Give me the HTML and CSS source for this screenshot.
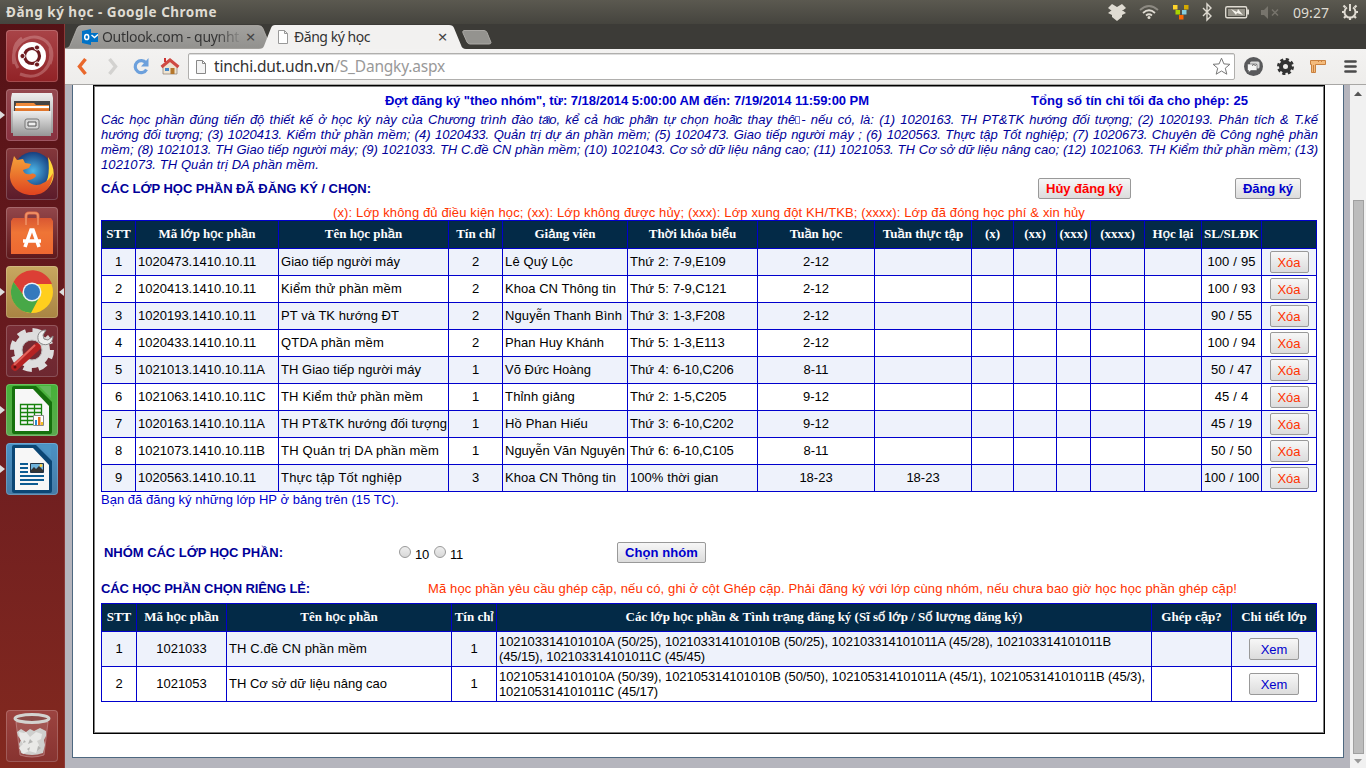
FILE: index.html
```html
<!DOCTYPE html>
<html lang="vi">
<head>
<meta charset="utf-8">
<title>Đăng ký học</title>
<link rel="stylesheet" href="styles.css">
</head>
<body>
<header class="panel">
  <span class="panel-title" data-w="211">Đăng ký học - Google Chrome</span>
  <svg class="panel-icons" width="180" height="24" viewBox="1105 0 180 24">
    <g fill="#dfdbd2">
      <path d="M1112 4l5 3-5 4-4-3zM1122 4l-5 3 5 4 4-3zM1108 13l4-3 5 4 5-4 4 3-4 2v2l-5 4-5-4v-2z"/><path d="M1112 7h10v9h-10z"/>
    </g>
    <g fill="none" stroke="#dfdbd2" stroke-width="1.8">
      <path d="M1140 10q9-8 18 0" stroke="#8d8a82"/><path d="M1143 13q6-5.500 12 0M1146 15.500q3-2.500 6 0"/>
    </g>
    <circle cx="1149" cy="17.500" r="1.500" fill="#dfdbd2"/>
    <path fill="#ffd42a" d="M1173 5h4.500v4.500h-4.500z"/><path fill="#d4aa00" d="M1184 5h4.500v4.500h-4.500z"/><path fill="#aad400" d="M1175.500 10h4.500v4.500h-4.500z"/><path fill="#87cdde" d="M1182 10h4.500v4.500h-4.500z"/><path fill="#ff6600" d="M1179 15h4.500v4.500h-4.500z"/>
    <path d="M1203 8l8 8-4 4V4l4 4-8 8" fill="none" stroke="#dfdbd2" stroke-width="1.400"/>
    <rect x="1225.700" y="6.700" width="21" height="11" rx="1.500" fill="none" stroke="#dfdbd2" stroke-width="1.400"/><path fill="#dfdbd2" d="M1247 9.500h2v5h-2z"/><path fill="#969389" d="M1228 9h17v7h-17z"/><path fill="#f5f2ea" d="M1231 9l6 3 1-3 5 6-6-2-1 2z"/>
    <g fill="#77746c"><path d="M1261 10h3l4-4v13l-4-4h-3z"/><path d="M1272 9.500l6 6m0-6l-6 6" stroke="#77746c" stroke-width="1.500"/></g>
  </svg>
  <span class="clock" data-w="36">09:27</span>
  <svg class="power" width="18" height="18" viewBox="-9 -9 18 18"><g fill="none" stroke="#dfdbd2"><path stroke-width="2" d="M-3-4.500a5.500 5.500 0 1 0 6 0M0-8v7"/><path stroke-width="2.200" d="M-4.500-4.500l-2-2M4.500-4.500l2-2M-6 0h-2M6 0h2M-4 4l-2 2M4 4l2 2M0 6v2"/></g></svg>
</header>
<div class="desktop">
<nav class="launcher">
  <div class="tile t-dash"><svg viewBox="0 0 52 52"><g fill="none" stroke="#f0c7c7" stroke-opacity=".3" stroke-width="3"><path d="M8 34C4 14 22 4 34 8s14 16 10 26M14 44C34 52 48 36 44 18M16 8C6 14 6 28 12 38"/></g><circle cx="26" cy="26" r="14" fill="#fff"/><circle cx="26" cy="26" r="7.500" fill="none" stroke="#6d1a1f" stroke-width="3.200"/><g fill="#6d1a1f" stroke="#fff" stroke-width="1"><circle cx="16.500" cy="26" r="2.600"/><circle cx="31" cy="17.500" r="2.600"/><circle cx="31" cy="34.500" r="2.600"/></g></svg></div>
  <div class="tile t-files run"><svg viewBox="0 0 52 52"><defs><linearGradient id="met" x2="0" y2="1"><stop stop-color="#eee"/><stop offset="1" stop-color="#969696"/></linearGradient></defs><path d="M6 4h40l1 5v35H5V9z" fill="url(#met)"/><path fill="#444" d="M8 12h36v11H8z"/><path fill="#f08a3a" d="M10 14h18l2 2h13v8H9z"/><path fill="#fff" d="M9 17h34v2H9z"/><path fill="#e0762d" d="M9 20h34v3H9z"/><path d="M7 22h38v25H7z" fill="url(#met)"/><rect x="19" y="30" width="14" height="10" rx="2" fill="#d5d5d5" stroke="#777"/><path fill="#eee" stroke="#555" d="M22 33h8v4h-8z"/></svg></div>
  <div class="tile t-fox"><svg viewBox="0 0 52 52"><defs><radialGradient id="ff"><stop stop-color="#4cb7e8"/><stop offset="1" stop-color="#173f7f"/></radialGradient><linearGradient id="fo" x2="0" y2="1"><stop stop-color="#f5a33a"/><stop offset="1" stop-color="#df431f"/></linearGradient></defs><circle cx="27" cy="23" r="19" fill="url(#ff)"/><path fill="#ffd83a" d="M42 9c11 16 6 34-14 37l-4-3c16 0 21-12 18-34z"/><path fill="url(#fo)" d="M5 20l3-12 3 4 6-1 2 4 6 1-2 4-6 2c1 4 4 5 8 4 2-1 5 0 5 2-3 4-7 4-9 4 4 6 12 6 16 3 5-2 7-5 10-10-1 13-7 22-21 22C12 47 3 37 4 26z"/></svg></div>
  <div class="tile t-soft"><svg viewBox="0 0 52 52"><path fill="none" stroke="#e06c48" stroke-width="3" d="M20 17V9q0-3 3-3h6q3 0 3 3v8"/><defs><linearGradient id="bag" x2="0" y2="1"><stop stop-color="#d95732"/><stop offset=".4" stop-color="#ef7536"/><stop offset="1" stop-color="#ee6831"/></linearGradient></defs><path fill="url(#bag)" d="M5 14l2-3h38l2 3v33H5z"/><path fill="none" stroke="#f09468" stroke-width="1.500" d="M20 18V9q0-3 3-3h6q3 0 3 3v9"/><path fill="none" stroke="#fff" stroke-width="3.600" d="M19 40l6-17h2l6 17M17 34h18"/></svg></div>
  <div class="tile t-chrome run foc"><svg viewBox="0 0 52 52"><circle cx="26" cy="26" r="21" fill="#ffcf1e"/><path fill="#dc3f35" d="M7.500 16A21 21 0 0 1 46 18H26a8 8 0 0 0-7 4l-3 6z"/><path fill="#47a847" d="M7.500 16A21 21 0 0 0 25 47l9-17-8 4-8-4z"/><circle cx="26" cy="26" r="9.500" fill="#eef3f7"/><circle cx="26" cy="26" r="8" fill="#3479bd"/></svg></div>
  <div class="tile t-set"><svg viewBox="0 0 52 52"><circle cx="26" cy="25" r="19.500" fill="none" stroke="#ddd" stroke-width="5" stroke-dasharray="8.500 6.800"/><circle cx="26" cy="25" r="14" fill="none" stroke="#dedede" stroke-width="8"/><circle cx="26" cy="25" r="10" fill="none" stroke="#bbb"/><path d="M32 22l8-8" stroke="#ccc" stroke-width="5"/><path d="M9 42L31 22" stroke="#b52222" stroke-width="7.500" stroke-linecap="round"/><path d="M8 40L29 20" stroke="#e2625b" stroke-width="2"/><path d="M40 5c-7 0-10 6-7 12 5 5 14 3 14-6l-5 4-4-1-1-4z" fill="#eee" stroke="#888"/><circle cx="9" cy="42" r="1.500" fill="#5b1010"/></svg></div>
  <div class="tile t-calc run"><svg viewBox="0 0 52 52"><path fill="#16700d" d="M6 4q0-2 2-2h22l16 16v30q0 2-2 2H8q-2 0-2-2z"/><path fill="#63b95a" d="M33 2h12v12z"/><path fill="#f7f7f7" d="M9 5h18l16 17v25H9z"/><g fill="none" stroke="#16820d" stroke-width="1.300"><path d="M14.500 20.500h21v20h-21zM14.500 24.500h21M14.500 28.500h21M14.500 32.500h21M14.500 36.500h21M21.500 20.500v20M28.500 20.500v20"/></g><path fill="#fff" stroke="#888" d="M27.500 31.500h10v10h-10z"/><path fill="#2a8ad0" d="M29 36h2v5h-2z"/><path fill="#e86f1c" d="M32 33h2.500v8H32z"/><path fill="#f2c020" d="M35 38h2v3h-2z"/></svg></div>
  <div class="tile t-writer run"><svg viewBox="0 0 52 52"><path fill="#0b4674" d="M6 4q0-2 2-2h22l16 16v30q0 2-2 2H8q-2 0-2-2z"/><path fill="#4c94c4" d="M33 2h12v12z"/><path fill="#f7f7f7" d="M9 5h18l16 17v25H9z"/><path stroke="#0c5b92" stroke-width="2" d="M14 21h8M14 25h8M14 29h8M14 33h24M14 37h24M14 41h18"/><path fill="#6fb3dc" stroke="#234" d="M24.500 20.500h13v9h-13z"/><path fill="#333" d="M25 29v-2l3-3 2 2 3-3 4 4v2z"/><circle cx="35" cy="22.500" r="1.500" fill="#ffcf3f"/></svg></div>
  <div class="tile t-trash"><svg viewBox="0 0 52 52"><path fill="#fff" fill-opacity=".12" stroke="#c99" stroke-opacity=".6" d="M10 12l4 33q12 4 24 0l4-33z"/><path fill="#cfcfcd" d="M11 22l4-3 5 3 4-3 4 2 6-3 6 3v5l-2 4 1 5-2 8q-11 4-22 0l-2-9 2-4-3-4z"/><path fill="#e9e9e7" d="M13 22l5 1 2-1 4 5 6-5 6 2-1 5-4 2 2 4-3 8-7-2-6 3-4-6 4-4-3-5z"/><path fill="#b4b4b2" d="M24 29l3 3-5 2zM32 36l3 2-4 3zM18 30l2 2-3 1zM21 39l3-2-1 4z"/><ellipse cx="26" cy="8.500" rx="17" ry="4" fill="#8a4a47" stroke="#d3d3d0" stroke-width="3"/></svg></div>
</nav>
<main class="browser">
  <div class="tabstrip">
    <svg class="tabshape" width="440" height="25" viewBox="65 24 440 25"><defs><linearGradient id="tg" x2="0" y2="1"><stop stop-color="#a3a29f"/><stop offset="1" stop-color="#92918e"/></linearGradient></defs><path fill="url(#tg)" stroke="#bbb9b4" stroke-width=".7" d="M65 48.500q4 0 5-3l7-17q1-3 5-3h176q4 0 5 3l7 17q1 3 4 3z"/><path fill="#f2f1f0" d="M259 49q4 0 5-3l7-18q1-3 4-3h174q4 0 5 3l7 17q1 4 5 4z"/><path fill="#94938f" stroke="#aaa8a4" d="M464 30.500h20q2 0 3 2l4 10q0 1.500-2 1.500h-19q-2 0-3-2l-4-9q-1-2 1-2.500z"/></svg>
    <div class="tab tab1"><svg width="16" height="16"><path fill="#0072c6" d="M0 2l9-2v16l-9-2z"/><path fill="#0072c6" d="M9 4h7v9H9z"/><path fill="none" stroke="#fff" stroke-width="1.400" d="M9.500 6l3 2.500 3.500-3"/><ellipse cx="4.700" cy="8" rx="2" ry="2.600" fill="none" stroke="#fff" stroke-width="1.500"/></svg><span class="tt" data-w="137">Outlook.com - quynht</span><span class="x">×</span></div>
    <div class="tab tab2"><svg width="12" height="14"><path fill="#fff" stroke="#999" d="M1.500.5h6l3 3v10h-9zM7.500.5v3h3"/></svg><span class="tt" data-w="76">Đăng ký học</span><span class="x">×</span></div>
  </div>
  <div class="toolbar">
    <svg class="nav" width="120" height="35" viewBox="65 49 120 35"><path d="M84.500 59l-6 7.500 6 7.500" fill="none" stroke="#e9682c" stroke-width="3.500"/><path d="M108.500 59l6 7.500-6 7.500" fill="none" stroke="#d3d2d0" stroke-width="3.500"/><path d="M145 63a6 6 0 1 0 .5 6.500" fill="none" stroke="#6ca0dc" stroke-width="3.200"/><path fill="#6ca0dc" d="M147.500 58v8.500H140z"/><path fill="#eee4d2" stroke="#8a7d70" stroke-width=".7" d="M162 65l7-6 7 6v9h-14z"/><path fill="#b5762b" d="M169.500 68h4v6h-4z"/><path fill="#4587c7" d="M164 68h4v3h-4z"/><path fill="none" stroke="#cf4a43" stroke-width="3" d="M160.500 67l8.500-7 8.500 7"/><path fill="#c33" d="M163 58h2v4h-2z"/></svg>
    <div class="omni"><svg width="12" height="16"><path fill="#f4f4f4" stroke="#888" d="M1.500 1.500h6l3 3v10h-9zM7.500 1.500v3h3"/></svg><span class="url" data-w="231">tinchi.dut.udn.vn<span>/S_Dangky.aspx</span></span><svg class="star" width="19" height="19" viewBox="0 0 19 19"><path fill="#fff" stroke="#777" d="M9.500 1.200l2.400 5.700 6 .4-4.600 3.900 1.500 6-5.300-3.200-5.300 3.200 1.500-6L1.100 7.300l6-.4z"/></svg></div>
    <svg class="ext" width="131" height="35" viewBox="1235 49 131 35"><circle cx="1253.500" cy="66.500" r="9.500" fill="#58595b"/><rect x="1250" y="61.500" width="9.500" height="7" rx="1.500" fill="#d8d8d8"/><path fill="#f4f4f4" stroke="#58595b" stroke-width=".6" d="M1248 64h8q1 0 1 1v4.500q0 1-1 1h-5l-2.500 2v-2q-1 0-1-1V65q0-1 .5-1z"/><path fill="none" stroke="#555" d="M1252 65.500q1.500-1.500 2.500-.5t2-.5"/><circle cx="1285.500" cy="66.500" r="7" fill="none" stroke="#333" stroke-width="3" stroke-dasharray="3.100 2.400"/><circle cx="1285.500" cy="66.500" r="4.500" fill="none" stroke="#333" stroke-width="4"/><path fill="#f4bb7c" stroke="#c9813f" d="M1310.500 60.500h15v4h-10v8h-4v-8h-1z"/><path stroke="#c9813f" d="M1318.500 60v2M1321.500 60v2M1313.500 65v7"/><path stroke="#4b4b4b" stroke-width="2.700" stroke-linecap="round" d="M1345.500 61.500h10M1345.500 66.500h10M1345.500 71.500h10"/></svg>
  </div>
  <div class="viewport">
    <div class="page"><section class="box">
      <div class="row r-period"><b class="per" data-w="484">Đợt đăng ký "theo nhóm", từ: 7/18/2014 5:00:00 AM đến: 7/19/2014 11:59:00 PM</b><b class="max" data-w="217">Tổng số tín chỉ tối đa cho phép: 25</b></div>
      <div class="plan">
        <div>Các học phần đúng tiến độ thiết kế ở học kỳ này của Chương trình đào ta<i class="k"></i>o, kể cả ho<i class="k"></i>c phâ<i class="k"></i>n tự chọn hoă<i class="k"></i>c thay thê<i class="k s"></i>- nếu có, là: (1) 1020163. TH PT&amp;TK hướng đối tượng; (2) 1020193. Phân tích &amp; T.kế</div>
        <div>hướng đối tượng; (3) 1020413. Kiểm thử phần mềm; (4) 1020433. Quản trị dự án phần mềm; (5) 1020473. Giao tiếp người máy ; (6) 1020563. Thực tập Tốt nghiệp; (7) 1020673. Chuyên đề Công nghệ phần</div>
        <div>mềm; (8) 1021013. TH Giao tiếp người máy; (9) 1021033. TH C.đề CN phần mềm; (10) 1021043. Cơ sở dữ liệu nâng cao; (11) 1021053. TH Cơ sở dữ liệu nâng cao; (12) 1021063. TH Kiểm thử phần mềm; (13)</div>
        <div class="last"><span data-w="218">1021073. TH Quản trị DA phần mềm.</span></div>
      </div>
      <div class="row r-picked"><b class="h" data-w="270">CÁC LỚP HỌC PHẦN ĐÃ ĐĂNG KÝ / CHỌN:</b><button class="btn cancel"><span data-w="77">Hủy đăng ký</span></button><button class="btn reg"><span data-w="50">Đăng ký</span></button></div>
      <div class="row r-note"><span data-w="752">(x): Lớp không đủ điều kiện học; (xx): Lớp không được hủy; (xxx): Lớp xung đột KH/TKB; (xxxx): Lớp đã đóng học phí &amp; xin hủy</span></div>
      <table id="t1"></table>
      <div class="row r-sum"><span data-w="298">Bạn đã đăng ký những lớp HP ở bảng trên (15 TC).</span></div>
      <div class="row r-group"><b class="h" data-w="179">NHÓM CÁC LỚP HỌC PHẦN:</b><i class="radio"></i><span class="n">10</span><i class="radio"></i><span class="n">11</span><button class="btn pick"><span data-w="73">Chọn nhóm</span></button></div>
      <div class="row r-single"><b class="h" data-w="209">CÁC HỌC PHẦN CHỌN RIÊNG LẺ:</b><span class="warn" data-w="809">Mã học phần yêu cầu ghép cặp, nếu có, ghi ở cột Ghép cặp. Phải đăng ký với lớp cùng nhóm, nếu chưa bao giờ học học phần ghép cặp!</span></div>
      <table id="t2"></table>
    </section></div>
    <div class="scroll"><svg width="16" height="20"><path fill="#555" d="M4 11l4-4.500 4 4.500z"/></svg><div class="thumb"></div><svg class="dn" width="16" height="14"><path fill="#999" d="M4 5h8l-4 4.500z"/></svg></div>
  </div>
</main>
</div>
<script src="app.js"></script>
</body>
</html>
```
FILE: styles.css
```css
*{box-sizing:border-box}
body{margin:0;width:1366px;height:768px;overflow:hidden;font:13px/15px "Liberation Sans",Arial,sans-serif;color:#000;background:#3c3b37}
svg{display:block;flex:none}
[data-w]{white-space:pre;display:inline-block}
.panel{height:24px;display:flex;align-items:center;background:linear-gradient(#5b5950,#45443e);color:#dfdbd2;font-family:"Noto Sans","Open Sans",sans-serif}
.panel-title{font-weight:700;font-size:13.5px;margin-left:6px}
.panel-icons{margin-left:auto}
.clock{font-size:14px;margin:0 0 0 8px}
.power{margin:0 7px 0 12px}
.desktop{display:flex;height:744px}
.launcher{width:65px;flex:none;background:linear-gradient(#551216,#6b1c20 50%,#83291f);border-right:1px solid #8b3a38;padding:6px 0 6px 6px;display:flex;flex-direction:column;gap:7px}
.tile{width:52px;height:52px;border-radius:4px;position:relative;background:linear-gradient(#93474b,#5d181b);box-shadow:inset 0 0 0 1px #ffffff30}
.t-dash{background:linear-gradient(#a94448,#912226)}
.t-files{background:linear-gradient(#94484f,#88303f)}
.t-fox{background:linear-gradient(#85383c,#5b1b2a)}
.t-chrome{background:linear-gradient(#c8a860,#a98443)}
.t-set{background:linear-gradient(#7a2e36,#6d2730)}
.t-calc{background:linear-gradient(#46b338,#5ba84e)}
.t-writer{background:linear-gradient(#4b92c5,#457ba6)}
.t-trash{margin-top:auto;background:linear-gradient(#9c4440,#873330)}
.run::before{content:"";position:absolute;left:-6px;top:22px;border:solid transparent;border-width:4px 0 4px 5px;border-left-color:#ddd}
.foc::after{content:"";position:absolute;right:-6px;top:22px;border:solid transparent;border-width:4px 5px 4px 0;border-right-color:#ddd}
.browser{flex:1;display:flex;flex-direction:column}
.tabstrip{height:25px;display:flex;position:relative;background:#3c3b37;font:14px/24px "Noto Sans","Open Sans",sans-serif;color:#333}
.tabshape{position:absolute;left:0;top:0}
.tab{position:relative;display:flex;align-items:center;height:25px}
.tab1{width:194px;padding-left:17px}
.tab2{width:190px;padding-left:18px}
.tt{margin-left:4px}
.tab2 .tt{margin-left:5px}
.tab1 .tt{background:linear-gradient(90deg,#333 84%,#8a8987);-webkit-background-clip:text;background-clip:text;color:transparent}
.x{margin-left:auto;font-size:17px;color:#444;width:19px;text-align:center}
.tab1 .x{margin-right:-1px}
.tab2 .x{margin-right:-3px}
.toolbar{height:36px;display:flex;background:linear-gradient(#f3f2f1,#eeedeb);border-bottom:1px solid #a8a7a5}
.nav{width:122px}
.omni{width:1047px;height:27px;margin:4px 0 0 1px;border:1px solid #b0afad;border-radius:2px;background:#fff;box-shadow:inset 0 1px #ddd;display:flex;align-items:center;padding-left:6px}
.url{font:15.5px/24px "Noto Sans","Open Sans",sans-serif;margin:-2px 0 0 7px;color:#333}
.url span{color:#999}
.star{margin:0 3px 0 auto}
.viewport{flex:1;display:flex;background:#b5b5bd}
.page{width:1272px;height:673px;margin-left:7px;border:1px solid #4e6880;border-top:0;background:#fff;padding-left:20px}
.box{width:1232px;height:649px;border:1px solid #000;box-shadow:inset 0 0 0 1px #808080;padding:3px 7px;color:#0000cd}
.row{display:flex;align-items:center}
.row>*{flex:none}
.r-period{height:23px}
.per{margin-left:284px}
.max{margin-left:162px}
.plan{font-style:italic;color:#000099}
.plan div{height:15px;white-space:nowrap;text-align-last:justify;width:1217px}
.plan .last{text-align-last:left}
.k{display:inline-block;width:4px;height:8px;margin:0 -1px 0 -3px;border:1px solid #7777cc}
.k.s{width:5px;margin:0 1px 0 0}
.h{color:#000099}
.r-picked{height:33px}
.btn{height:21px;padding:0;border:1px solid #999;border-radius:2px;background:linear-gradient(#f7f7f7,#dcdcdc);font:13px/15px "Liberation Sans",Arial,sans-serif;color:#0000cd;display:flex;align-items:center;justify-content:center}
.row .btn{font-weight:700}
.row .cancel{color:#f00;width:93px;margin-left:667px}
.reg{width:66px;margin-left:104px}
.r-note{height:15px;padding-left:232px;color:#ff3300}
table{border-spacing:0;table-layout:fixed;width:1216px;color:#000;font-size:13px}
td,th{padding:0 0 1px;text-align:center;border:solid #0000cd;border-width:0 1px 1px 0;height:27px;white-space:nowrap;vertical-align:middle}
td:first-child,th:first-child{border-left-width:1px}
th{height:29px;border-top-width:1px;padding-bottom:2px;background:#032a47;background-clip:padding-box;color:#fff;font:700 13px/15px "Liberation Serif",serif}
th span.v{font-family:"Liberation Sans",sans-serif;font-weight:400;-webkit-text-stroke:.3px #fff;font-size:13px;line-height:1px}
tr:nth-child(even) td{background:#eef2fb;background-clip:padding-box}
td.l{text-align:left;padding-left:2px}
td .c{word-spacing:.5px}
td .btn{width:39px;height:22px;margin:0 auto;padding-top:2px;color:#ff3300}
td .btn.xem{width:50px;color:#0000cd}
#t2 td{height:35px}
.r-sum{height:15px}
.r-group{height:30px;margin-top:30px;padding-left:3px}
.radio{width:12px;height:12px;border:1px solid #999;border-radius:50%;background:linear-gradient(#eee,#d8d8d8)}
.r-group .h+.radio{margin-left:116px}
.n{color:#000;margin:4px 5px 0 4px;width:14px;letter-spacing:-.2px}
.pick{width:89px;margin-left:148px}
.r-single{height:15px;margin:14px 0 7px}
.warn{margin-left:118px;color:#ff3300}
.scroll{width:16px;margin-left:6px;background:#f1f1f1;display:flex;flex-direction:column}
.thumb{height:554px;width:11px;margin:95px 0 0 3px;background:#bcbcbc;border:1px solid #a0a0a0}
.dn{margin-top:auto}
```
FILE: app.js
```js
const b = (t, c) => `<button class="btn ${c}">${t}</button>`;
const w = (t, n) => `<span data-w="${n}">${t}</span>`;
function build(id, widths, heads, rows, left) {
  const mark = s => s.replace(/[\u1EA0-\u1EF9ơư]/g, c => `<span class="v">${c}</span>`);
  document.getElementById(id).innerHTML =
    '<colgroup>' + widths.map(w => `<col style="width:${w}px">`).join('') + '</colgroup><tbody><tr>' +
    heads.map(h => `<th>${mark(h)}</th>`).join('') + '</tr>' +
    rows.map(r => '<tr>' + r.map((c, i) => `<td class="${left.includes(i) ? 'l' : ''}">${c[0] === '<' ? c : `<span class="c">${c}</span>`}</td>`).join('') + '</tr>').join('') + '</tbody>';
}
const classes = [
  ['1020473.1410.10.11', w('Giao tiếp người máy', 119), '2', w('Lê Quý Lộc', 68), 'Thứ 2: 7-9,E109', '2-12', '', '100 / 95'],
  ['1020413.1410.10.11', w('Kiểm thử phần mềm', 121), '2', w('Khoa CN Thông tin', 111), 'Thứ 5: 7-9,C121', '2-12', '', '100 / 93'],
  ['1020193.1410.10.11', w('PT và TK hướng ĐT', 118), '2', w('Nguyễn Thanh Bình', 117), 'Thứ 3: 1-3,F208', '2-12', '', '90 / 55'],
  ['1020433.1410.10.11', w('QTDA phần mềm', 103), '2', w('Phan Huy Khánh', 99), 'Thứ 5: 1-3,E113', '2-12', '', '100 / 94'],
  ['1021013.1410.10.11A', w('TH Giao tiếp người máy', 140), '1', w('Võ Đức Hoàng', 86), 'Thứ 4: 6-10,C206', '8-11', '', '50 / 47'],
  ['1021063.1410.10.11C', w('TH Kiểm thử phần mềm', 142), '1', w('Thỉnh giảng', 70), 'Thứ 2: 1-5,C205', '9-12', '', '45 / 4'],
  ['1020163.1410.10.11A', w('TH PT&amp;TK hướng đối tượng', 166), '1', w('Hồ Phan Hiếu', 83), 'Thứ 3: 6-10,C202', '9-12', '', '45 / 19'],
  ['1021073.1410.10.11B', w('TH Quản trị DA phần mềm', 158), '1', w('Nguyễn Văn Nguyên', 120), 'Thứ 6: 6-10,C105', '8-11', '', '50 / 50'],
  ['1020563.1410.10.11', w('Thực tập Tốt nghiệp', 121), '3', w('Khoa CN Thông tin', 111), '100% thời gian', '18-23', '18-23', '100 / 100']
];
build('t1', [35, 143, 170, 54, 125, 130, 117, 97, 42, 43, 34, 54, 57, 60, 55],
  ['STT', 'Mã lớp học phần', 'Tên học phần', 'Tín chỉ', 'Giảng viên', 'Thời khóa biểu', 'Tuần học', 'Tuần thực tập', '(x)', '(xx)', '(xxx)', '(xxxx)', 'Học lại', 'SL/SLĐK', ''],
  classes.map((r, i) => [String(i + 1), ...r.slice(0, 7), '', '', '', '', '', r[7], b('Xóa', '')]), [1, 2, 4, 5]);
build('t2', [36, 90, 225, 45, 655, 80, 85],
  ['STT', 'Mã học phần', 'Tên học phần', 'Tín chỉ', 'Các lớp học phần &amp; Tình trạng đăng ký (Sĩ số lớp / Số lượng đăng ký)', 'Ghép cặp?', 'Chi tiết lớp'],
  [['1', '1021033', w('TH C.đề CN phần mềm', 138), '1', w('102103314101010A (50/25), 102103314101010B (50/25), 102103314101011A (45/28), 102103314101011B', 612) + '<br>' + w('(45/15), 102103314101011C (45/45)', 206), '', b('Xem', 'xem')],
   ['2', '1021053', w('TH Cơ sở dữ liệu nâng cao', 158), '1', w('102105314101010A (50/39), 102105314101010B (50/50), 102105314101011A (45/1), 102105314101011B (45/3),', 646) + '<br>' + w('102105314101011C (45/17)', 159), '', b('Xem', 'xem')]], [2, 4]);
// Spread each labelled run over its nominal width.
document.querySelectorAll('[data-w]').forEach(e => {
  const n = e.textContent.length, width = e.getBoundingClientRect().width;
  e.style.letterSpacing = ((+e.dataset.w - width) / n) + 'px';
});
```
